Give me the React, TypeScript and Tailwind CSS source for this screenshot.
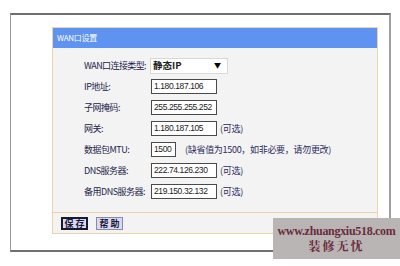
const rows = [
  { label: 'IP地址:', value: '1.180.187.106', w: 'w-[66px]', note: '' },
  { label: '子网掩码:', value: '255.255.255.252', w: 'w-[66px]', note: '' },
  { label: '网关:', value: '1.180.187.105', w: 'w-[66px]', note: '(可选)' },
  { label: '数据包MTU:', value: '1500', w: 'w-[25px]', note: '(缺省值为1500，如非必要，请勿更改)' },
  { label: 'DNS服务器:', value: '222.74.126.230', w: 'w-[66px]', note: '(可选)' },
  { label: '备用DNS服务器:', value: '219.150.32.132', w: 'w-[66px]', note: '(可选)' },
];

const font = "font-['SimSun','Noto_Sans_CJK_SC',sans-serif]";

export default function App() {
  return (
    <div className={`relative w-[400px] h-[266px] bg-white overflow-hidden ${font}`}>
      {/* outer frame */}
      <div className="ml-[10px] mt-[13px] w-[381px] h-[239px] border-t-2 border-b-2 border-l border-r-2 border-t-[#6e6e6e] border-b-[#707070] border-l-[#9a9a9a] border-r-[#a0a0a0] bg-white">
        <div className="ml-[41px] mt-[12px] w-[326px] h-[207px] border border-[#ecd3a8] bg-[#f3f3f3] flex flex-col">
          <div className="h-[20px] bg-[#5e93f1] flex items-center pl-[4px] text-white text-[8px] tracking-[-0.3px] whitespace-nowrap">
            WAN口设置
          </div>
          <div className="flex flex-col pt-[7px] pl-[31px] text-[#1d1d4a] text-[9.5px] whitespace-nowrap">
            <div className="flex items-center h-[21px]">
              <div className="w-[66px] shrink-0 tracking-[-0.6px] text-[9px]">WAN口连接类型:</div>
              <div className="w-[78px] h-[16px] bg-white border border-[#d8d8d8] flex items-center justify-between px-[2px]">
                <span className="font-bold text-[#222] text-[9.5px]">静态IP</span>
                <span className="text-[7px] text-black mr-[4px]">▼</span>
              </div>
            </div>
            {rows.map((r) => (
              <div key={r.label} className="flex items-center h-[21px]">
                <div className="w-[67px] shrink-0 tracking-[-0.5px] text-[9px]">{r.label}</div>
                <div className={`${r.w} shrink-0 h-[15px] bg-white border border-[#4a4a4a] flex items-center pl-[2px] text-[8.5px] text-[#1a1a1a] tracking-[-0.4px] font-['Liberation_Sans',sans-serif] overflow-hidden`}>
                  {r.value}
                </div>
                {r.note && (
                  <span className={`${r.value === '1500' ? 'ml-[9px]' : 'ml-[3px]'} text-[9px] text-[#2a2a60] tracking-[-0.3px]`}>
                    {r.note}
                  </span>
                )}
              </div>
            ))}
          </div>
          <div className="mt-auto h-[21px] border-t border-[#ecd3a8] flex items-center gap-[8px] pl-[8px]">
            <button className="h-[13px] w-[27px] bg-[#d9d9f2] border-2 border-[#1a1a2e] text-[9px] font-bold text-[#1a1a3a] flex items-center justify-center whitespace-pre leading-none">
              保 存
            </button>
            <button className="h-[13px] w-[27px] bg-[#d9d9f2] border border-[#8a8aa0] text-[9px] font-bold text-[#1a1a3a] flex items-center justify-center whitespace-pre leading-none">
              帮 助
            </button>
          </div>
        </div>
      </div>

      {/* watermark */}
      <div className="absolute left-[273px] top-[218px] w-[127px] h-[41px] bg-[#b9b5b5] flex flex-col items-center justify-center font-['Liberation_Serif','Noto_Serif_CJK_SC',serif] font-bold text-[#6b2a3a] leading-none whitespace-nowrap">
        <div className="text-[12px] tracking-[-0.3px]">www.zhuangxiu518.com</div>
        <div className="text-[12px] mt-[4px] tracking-[2px]">装修无忧</div>
      </div>
    </div>
  );
}
